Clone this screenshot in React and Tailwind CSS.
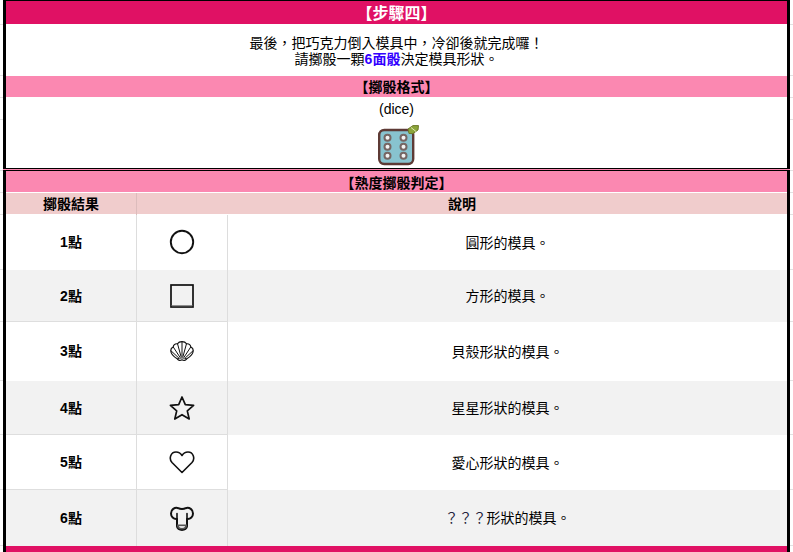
const font = { fontFamily: '"Liberation Sans","Noto Sans CJK TC",sans-serif' };

function Dice() {
  const pips = [[9.5, 12.7], [9.5, 21.7], [9.5, 30.7], [25.5, 12.7], [25.5, 21.7], [25.5, 30.7]];
  return (
    <svg width="41" height="41" viewBox="0 0 41 41" className="block">
      <rect x="1.2" y="5" width="34" height="34" rx="5" fill="#88c3cf" stroke="#5e3a35" strokeWidth="2.4" />
      {pips.map(([x, y]) => (
        <circle key={x + "-" + y} cx={x} cy={y} r="3" fill="#f4f4f4" stroke="#766663" strokeWidth="2" />
      ))}
      <path d="M30 4 L35 0.6 L40.5 0.6 L40 5 L35 8.5 L31 8.5 Z" fill="#8ba53a" stroke="#6f7a2c" strokeWidth="1" />
      <path d="M33 2.5 L38 6.5" stroke="#dfe8b0" strokeWidth="1" />
    </svg>
  );
}

const stroke = { fill: "none", stroke: "#111", strokeLinecap: "round", strokeLinejoin: "round" };

function Circle() {
  return (
    <svg width="26" height="26" viewBox="0 0 26 26" className="block -mt-[2px]">
      <circle cx="13" cy="13" r="11.2" {...stroke} strokeWidth="1.9" />
    </svg>
  );
}
function Square() {
  return (
    <svg width="26" height="26" viewBox="0 0 26 26" className="block">
      <rect x="2" y="2" width="22" height="22" {...stroke} strokeLinejoin="miter" strokeWidth="1.7" />
      <path d="M2.5 22.7 H23.5" stroke="#777" strokeWidth="1" />
    </svg>
  );
}
function Shell() {
  return (
    <svg width="24" height="21" viewBox="0 0 24 21" className="block">
      <path d="M7.5 18 C5 16.5 1 13 0.8 10 C0.6 8 1.8 6.6 3.2 6 C3.6 3.8 5.6 2.6 7.5 2.8 C8.6 1 10.5 0.6 12 0.6 C13.5 0.6 15.4 1 16.5 2.8 C18.4 2.6 20.4 3.8 20.8 6 C22.2 6.6 23.4 8 23.2 10 C23 13 19 16.5 16.5 18 C15.5 19.8 13.5 19.8 12 18.8 C10.5 19.8 8.5 19.8 7.5 18 Z" {...stroke} strokeWidth="1.2" />
      <path d="M9.8 16 L3.4 6.2 M11 15.5 L7.6 3 M13 15.5 L16.4 3 M14.2 16 L20.6 6.2 M8.6 16.8 L1.2 10 M15.4 16.8 L22.8 10 M7.5 18 C10 16.4 14 16.4 16.5 18 M12 1 V15.5" {...stroke} strokeWidth="1" />
    </svg>
  );
}
function Star() {
  return (
    <svg width="26" height="26" viewBox="0 0 26 26" className="block">
      <path d="M13 2 L16.3 9.7 L24.6 10.4 L18.3 15.9 L20.2 24 L13 19.7 L5.8 24 L7.7 15.9 L1.4 10.4 L9.7 9.7 Z" {...stroke} strokeWidth="1.7" />
    </svg>
  );
}
function Heart() {
  return (
    <svg width="26" height="24" viewBox="0 0 26 24" className="block">
      <path d="M13 22.5 L3 12.5 C-0.5 8.5 1.8 2 7 2 C9.8 2 11.8 3.5 13 5.5 C14.2 3.5 16.2 2 19 2 C24.2 2 26.5 8.5 23 12.5 Z" {...stroke} strokeWidth="1.6" />
    </svg>
  );
}
function Hat() {
  return (
    <svg width="24" height="25" viewBox="0 0 24 25" className="block">
      <path d="M7 13 C3.4 13.4 1 10.6 1 7.4 C1 3.8 4.6 0.8 8.4 2.2 C10 3.2 14 3.2 15.6 2.2 C19.4 0.8 23 3.8 23 7.4 C23 10.6 20.6 13.4 17 13 L17 20 C17 25.2 7 25.2 7 20 Z" {...stroke} strokeWidth="2" />
      <path d="M7 7.5 V20 M17 7.5 V20" {...stroke} strokeWidth="1.6" />
      <path d="M7 18.5 H17 V20 C17 24.5 7 24.5 7 20 Z" fill="#555" stroke="none" />
      <path d="M9 20 H15 C15 22.8 9 22.8 9 20 Z" fill="#e0e0e0" stroke="none" />
    </svg>
  );
}

const rows = [
  { n: "1點", icon: <Circle />, d: "圓形的模具。", h: "h-[55px]", bg: "bg-white", line: "", nudge: "" },
  { n: "2點", icon: <Square />, d: "方形的模具。", h: "h-[52px]", bg: "bg-[#f2f2f2]", line: " border-b border-b-[#dedede]", nudge: " pt-[2px]" },
  { n: "3點", icon: <Shell />, d: "貝殼形狀的模具。", h: "h-[59px]", bg: "bg-white", line: "", nudge: "" },
  { n: "4點", icon: <Star />, d: "星星形狀的模具。", h: "h-[54px]", bg: "bg-[#f2f2f2]", line: " border-b border-b-[#dedede]", nudge: " pt-[2px]" },
  { n: "5點", icon: <Heart />, d: "愛心形狀的模具。", h: "h-[55px]", bg: "bg-white", line: " border-b border-b-[#dedede]", nudge: "" },
  { n: "6點", icon: <Hat />, d: <><span className="text-[#22223a]">？？？</span>形狀的模具。</>, h: "h-[56px]", bg: "bg-[#f2f2f2]", line: "", nudge: "" },
];

function Gutter() {
  const bands = ["h-[25px]", "h-[51px]", "h-[22px]", "h-[22px]", "h-[51px]", "h-[22px]", "h-[22px]", "h-[55px]", "h-[52px]", "h-[59px]", "h-[54px]", "h-[55px]", "h-[56px]"];
  return (
    <div className="w-[3px] shrink-0">
      {bands.map((h, i) => (
        <div key={i} className={h + " border-b border-[#e2e2e2]"}></div>
      ))}
    </div>
  );
}

export default function App() {
  return (
    <div style={font} className="flex w-[793px] h-[552px] overflow-hidden bg-white text-[14px] text-black">
      <Gutter />
      <div className="w-[787px] shrink-0">
        <div className="border-x-[3px] border-t border-b border-black">
          <div className="h-[23px] bg-[#e01164] text-white text-[16px] font-bold leading-[25px] text-center">【步驟四】</div>
          <div className="h-[52px] bg-white text-center leading-[16px] pt-[11px]">
            <div>最後，把巧克力倒入模具中，冷卻後就完成囉！</div>
            <div>請擲骰一顆<span className="font-bold text-[#3300ff]">6面骰</span>決定模具形狀。</div>
          </div>
          <div className="h-[21px] bg-[#fb88b1] font-bold leading-[23px] text-center">【擲骰格式】</div>
          <div className="h-[71px] bg-white flex flex-col items-center pt-[4px]">
            <div className="leading-[16px]">(dice)</div>
            <div className="mt-[8px] ml-[3px]"><Dice /></div>
          </div>
        </div>
        <div className="h-[1px] bg-[#fb88b1]"></div>
        <div className="border-x-[3px] border-t border-black">
          <div className="h-[21px] bg-[#fb88b1] font-bold leading-[24px] text-center">【熟度擲骰判定】</div>
          <div className="h-[1px] bg-white"></div>
          <div className="grid grid-cols-[131px_1fr] h-[21px] bg-[#f0cccc] font-bold leading-[23px] text-center">
            <div className="border-r border-[#dcbcbc]">擲骰結果</div>
            <div>說明</div>
          </div>
          <div className="h-[1px] bg-white"></div>
          {rows.map((r) => (
            <div key={r.n} className={"grid grid-cols-[131px_91px_1fr] items-stretch " + r.h + " " + r.bg}>
              <div className={"flex items-center justify-center font-bold border-r border-r-[#dddddd]" + r.line + r.nudge}>{r.n}</div>
              <div className={"flex items-center justify-center border-r border-r-[#dddddd]" + r.line}>{r.icon}</div>
              <div className="flex items-center justify-center pt-[1px]">{r.d}</div>
            </div>
          ))}
          <div className="h-[6px] bg-[#e01164]"></div>
        </div>
      </div>
      <Gutter />
    </div>
  );
}
